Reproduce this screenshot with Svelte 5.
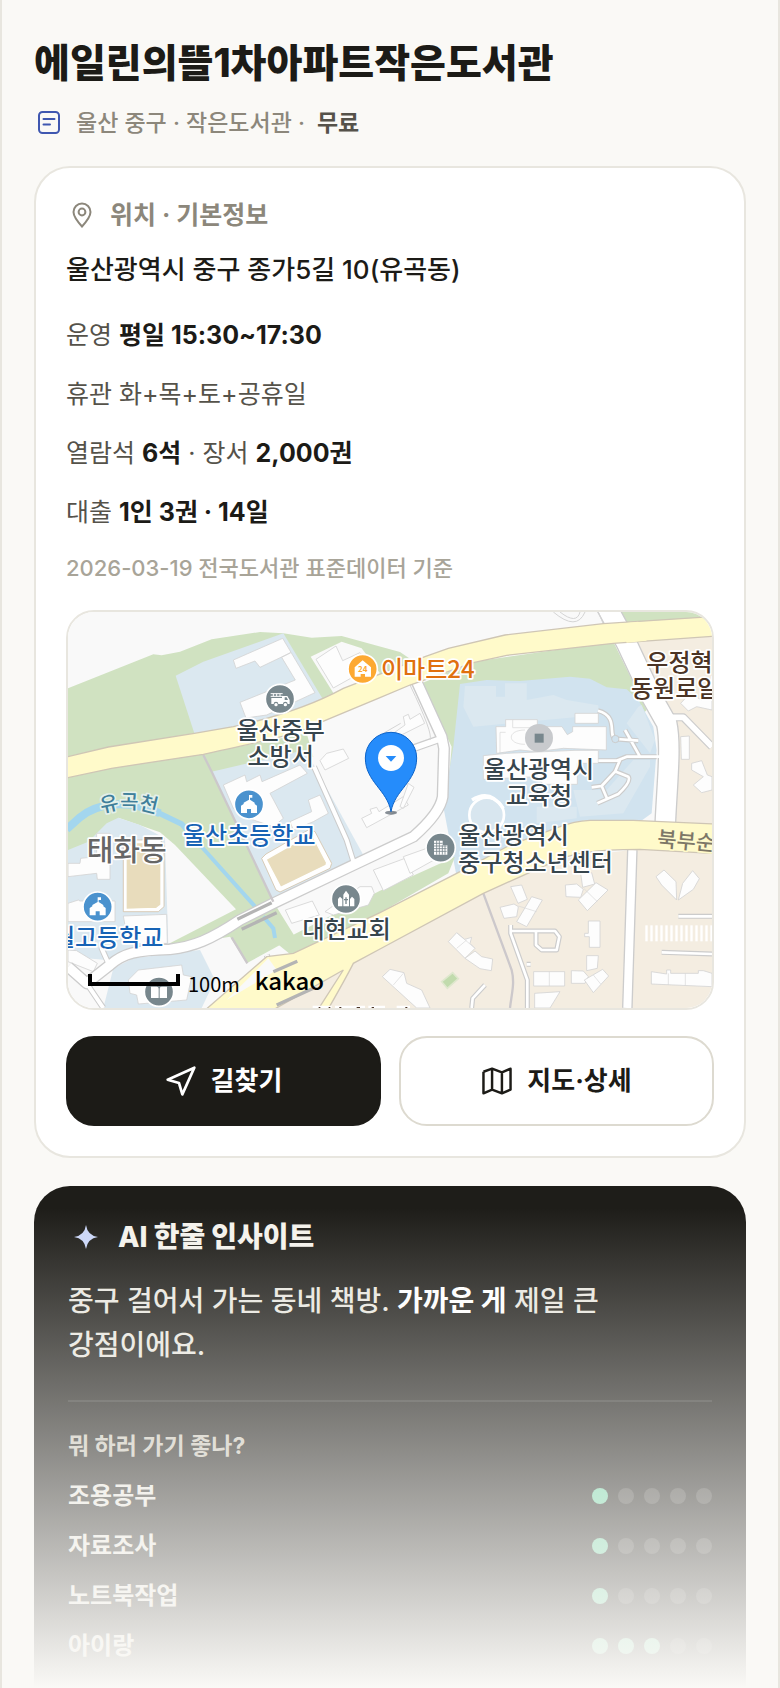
<script lang="ts">
    const library = {
        name: "에일린의뜰1차아파트작은도서관",
        region: "울산 중구 · 작은도서관 ·",
        fee: "무료",
        address: "울산광역시 중구 종가5길 10(유곡동)",
        source: "2026-03-19 전국도서관 표준데이터 기준",
    };

    const purposes = [
        { label: "조용공부", score: 1 },
        { label: "자료조사", score: 1 },
        { label: "노트북작업", score: 1 },
        { label: "아이랑", score: 3 },
    ];

    const steps = [1, 2, 3, 4, 5];

    // apartment blocks and other outlined footprints on the map
    const buildings = [
        "520,180 668,115 765,278 620,345 558,354 540,307 706,240 665,172 692,158 600,202 585,183 528,205",
        "768,178 828,138 848,182 900,158 935,200 820,264",
        "780,482 800,460 850,447 866,475 795,510",
        "490,555 555,525 560,545 600,525 606,545 720,495 742,520 630,580 670,655 640,680 550,650 520,625",
        "745,600 780,585 805,640 760,665 700,690 690,665 755,635",
        "905,655 935,640 930,628 950,622 957,635 1030,590 1045,615 920,683",
        "1000,400 1035,375 1030,350 1045,343 1050,358 1080,340 1094,370 1010,412",
        "1020,620 1045,550 1062,562 1030,625",
        "676,930 757,903 778,945 695,970",
        "940,810 1035,775 1060,825 970,872",
        "1030,770 1100,745 1122,780 1050,820",
        "795,935 900,860 935,860 943,880 925,915 820,945",
        "24,790 60,790 62,775 110,770 110,700 150,700 150,838 112,838 110,820 24,830",
        "190,948 320,943 322,1030 205,1032",
        "24,910 55,900 60,903 165,903 165,965 24,965",
        "24,1050 50,1052 112,1090 100,1115 24,1085",
        "205,1140 235,1110 365,1095 370,1125 395,1130 380,1200 235,1212 230,1185 210,1180",
        "1352,860 1385,855 1402,898 1374,910",
        "1320,922 1362,912 1375,920 1370,950 1332,955",
        "1415,890 1447,900 1400,980 1370,965",
        "1516,855 1550,852 1570,868 1562,892 1518,890",
        "1562,820 1595,818 1604,852 1568,862",
        "1555,900 1608,848 1644,870 1582,932",
        "1585,963 1620,963 1620,1042 1588,1042 1588,1010 1574,1010 1574,1000 1585,1000",
        "1580,1067 1615,1067 1612,1105 1580,1112",
        "1534,1112 1570,1113 1585,1130 1575,1150 1534,1150",
        "1573,1140 1628,1108 1646,1128 1600,1178",
        "1421,1115 1514,1115 1514,1158 1421,1158",
        "1424,1180 1500,1175 1470,1224 1424,1224",
        "1165,1025 1190,998 1214,1018 1235,1012 1230,1030 1245,1045 1215,1075",
        "1215,1075 1245,1053 1265,1070 1298,1077 1294,1112 1260,1106",
        "967,1130 990,1108 1032,1118 1040,1150 1085,1170 1110,1224 1070,1224",
        "1788,830 1812,810 1848,845 1850,900 1805,855",
        "1918,836 1898,812 1868,850 1855,900 1900,868",
        "1774,1115 1820,1122 1820,1110 1832,1110 1832,1120 1915,1120 1915,1112 1930,1112 1956,1120 1956,1160 1774,1152",
        "1862,410 1888,408 1888,478 1864,478",
        "1862,310 1890,280 1925,300 1956,280 1956,330 1910,320 1885,333",
        "1895,490 1925,482 1942,525 1956,530 1956,570 1925,578 1900,555 1930,530 1895,510",
        "1308,380 1337,380 1337,359 1432,359 1432,380 1506,380 1522,404 1538,395 1538,380 1639,380 1639,450 1510,445 1430,455 1380,450 1310,460",
        "1545,340 1615,340 1615,370 1545,370",
        "1270,467 1340,460 1545,451 1615,451 1615,490 1552,490 1552,553 1450,553 1430,530 1270,538",
    ];

    // [text, x, baseline, anchor, class]
    const labels: [string, number, number, string, string][] = [
        ["울산중부", 662, 416, "middle", "place"],
        ["소방서", 662, 496, "middle", "place"],
        ["이마트24", 963, 234, "start", "store"],
        ["울산광역시", 1437, 534, "middle", "place"],
        ["교육청", 1437, 612, "middle", "place"],
        ["우정혁신", 1759, 212, "start", "estate"],
        ["동원로얄", 1713, 291, "start", "estate"],
        ["울산초등학교", 369, 732, "start", "school"],
        ["월고등학교", 310, 1038, "end", "school"],
        ["대현교회", 860, 1014, "middle", "place"],
        ["울산광역시", 1195, 732, "start", "place"],
        ["중구청소년센터", 1195, 812, "start", "place"],
        ["태화동", 80, 783, "start", "district"],
    ];

    const stripes = Array.from({ length: 14 }, (_, i) => 1756 + i * 15);
</script>

<main class="page">
    <header class="header">
        <h1>{library.name}</h1>
        <p class="meta">
            <svg class="meta-icon" viewBox="0 0 30 30" aria-hidden="true">
                <rect x="5" y="4" width="20" height="21" rx="3.500" />
                <path d="M9.500 11h11M9.500 16.500h6.500" />
            </svg>
            <span>{library.region}</span>
            <strong>{library.fee}</strong>
        </p>
    </header>

    <section class="card">
        <h2 class="card-title">
            <svg class="pin-icon" viewBox="0 0 32 32" aria-hidden="true">
                <path d="M16 27.500C11.500 22.500 7.500 17.500 7.500 13a8.500 8.500 0 0 1 17 0c0 4.500-4 9.500-8.500 14.500z" />
                <circle cx="16" cy="13" r="3.400" />
            </svg>
            위치 · 기본정보
        </h2>
        <p class="address">{library.address}</p>
        <div class="facts">
            <p>운영 <b>평일 15:30~17:30</b></p>
            <p>휴관 화+목+토+공휴일</p>
            <p>열람석 <b>6석</b> · 장서 <b>2,000권</b></p>
            <p>대출 <b>1인 3권 · 14일</b></p>
        </div>
        <p class="source">{library.source}</p>

        <div class="map">
            <svg viewBox="24 36 1932 1188" preserveAspectRatio="xMidYMid slice" role="img" aria-label="도서관 위치 지도">
                <rect x="24" y="36" width="1932" height="1188" fill="#f9f9f9" />

                <!-- land use -->
                <path fill="#d0e2c1" d="M24 265L280 163L305 166L360 155L455 118L600 96L670 100L755 113L845 108L1020 156L1070 190L800 330L400 430L24 500z" />
                <path fill="#f9f9f9" d="M752 170L845 125L905 145L960 220L822 282z" />
                <path fill="#d0e2c1" d="M24 520L430 460L740 400L760 470L460 520L640 905L705 1010L560 1090L510 1010L325 1040L24 1000z" />
                <path fill="#f9f9f9" d="M175 653L300 697L345 735L528 928L325 1032z" />
                <path fill="#dbe8f0" d="M347 227L430 185L670 100L790 300L740 320L520 385L403 400z" />
                <path fill="#dbe8f0" d="M455 515L735 450L770 510L910 765L640 905z" />
                <path fill="#dbe8f0" d="M24 750L85 725L140 670L175 653L240 675L315 715L325 1040L140 1080L24 1070z" />
                <path fill="#dbe8f0" d="M160 1105L220 1075L420 1050L465 1140L425 1224H130z" />
                <path fill="#d0e2c1" d="M1085 250L1240 185L1660 125L1760 330L1500 600L1165 560L1175 440z" />
                <path fill="#d0e2c1" d="M1680 36H1956V60L1690 80z" />
                <path fill="#d1e3ef" d="M1200 252L1280 240L1380 243L1530 230L1590 236L1640 262L1700 268L1735 300L1780 380L1790 450L1775 640L1740 665L1500 685L1190 830L1150 620L1180 440z" />
                <path fill="#dbe8f0" d="M1215 258H1308V290H1335V250H1400V300L1480 285L1520 300L1615 316V345L1240 380L1210 320zM1735 320L1745 315L1785 420L1770 460L1700 370zM1430 620H1550V655L1430 670zM1540 570H1640L1720 480H1770V500L1690 640L1560 650z" />
                <path fill="#d0e2c1" d="M700 1070L960 938L1165 820L1185 770L960 872L650 1030z" />
                <path fill="#f4ede1" d="M640 1224L880 1090L1270 880L1480 780L1710 750L1956 750V1224z" />
                <path fill="#f4ede1" d="M1710 125L1956 105V675H1835L1845 400z" />

                <!-- buildings -->
                <g fill="#fdfdfd" stroke="#d4d4d4" stroke-width="2.500">
                    {#each buildings as points}
                        <polygon {points} />
                    {/each}
                </g>
                <g fill="none" stroke="#d8d8d8" stroke-width="2">
                    <path d="M1192 1000L1245 1045M1190 1045L1220 1020M1375 918L1430 935M1572 866L1612 905M1468 1115V1158M1600 1125L1622 1152M1825 1120V1155M1876 1120V1156M1000 1155L1030 1120M1320 460V397H1337M1358 359V383H1432M1395 390C1340 390 1340 433 1395 433" />
                </g>

                <!-- sports fields -->
                <g stroke="#cdb898" stroke-width="2">
                    <path fill="#fff" d="M605 775L618 762L745 690L765 695L815 790L810 805L660 876L648 870z" />
                    <path fill="#e8dcbc" stroke="#fff" stroke-width="4" d="M618 778L745 706L758 708L800 788L798 796L662 862z" />
                    <path fill="#fff" d="M190 720H300L312 735V920L295 935H190z" />
                    <path fill="#e8dcbc" stroke="#fff" stroke-width="4" d="M198 728H296L303 738V915L290 925L198 928z" />
                </g>

                <!-- stream -->
                <path fill="none" stroke="#a3d6ee" stroke-width="24" d="M20 688L60 652C110 610 200 595 300 640" />
                <path fill="none" stroke="#a3d6ee" stroke-width="16" d="M290 636L365 672L425 740" />
                <path fill="none" stroke="#a3d6ee" stroke-width="12" d="M420 735L590 925M610 950L640 985L645 1014" />

                <!-- minor roads: casing, then surface -->
                <g fill="none" stroke="#ccc" stroke-linejoin="round">
                    <path stroke-width="66" d="M1640 20L1700 130L1775 290L1820 370C1835 440 1820 560 1815 690" />
                    <path stroke-width="36" d="M1070 245L1145 410L1152 445L1148 590Q1140 640 1060 710L870 800L640 910L540 960C450 1020 400 1040 330 1048C230 1050 190 1060 150 1095L80 1150L24 1100" />
                    <path stroke-width="32" d="M1717 750L1702 1224" />
                    <path stroke-width="18" d="M762 500L860 720L882 790M130 1020L125 1045L145 1090M80 1150L130 1224M620 1065L640 1110" />
                    <path stroke-width="24" d="M1060 445L1145 415M1835 352H1870L1956 440" />
                    <path stroke-width="15" d="M1790 470H1700L1670 482H1615M1740 470L1695 390M1735 422L1670 417M1614 332C1680 350 1640 410 1668 417M1680 480L1665 515L1625 558L1595 562M1668 515L1705 530Q1715 545 1675 582L1612 610M1625 558L1642 598M1352 975V1000L1402 1140V1224M1355 993H1485L1498 1010L1490 1050H1445L1428 1035V995M1400 1093H1412M1235 1224L1238 1195L1275 1155M1855 949H1956M1805 1057L1956 1062" />
                </g>
                <g fill="none" stroke="#fff" stroke-linejoin="round">
                    <path stroke-width="58" d="M1640 20L1700 130L1775 290L1820 370C1835 440 1820 560 1815 690" />
                    <path stroke-width="28" d="M1070 245L1145 410L1152 445L1148 590Q1140 640 1060 710L870 800L640 910L540 960C450 1020 400 1040 330 1048C230 1050 190 1060 150 1095L80 1150L24 1100" />
                    <path stroke-width="24" d="M1717 750L1702 1224" />
                    <path stroke-width="12" d="M762 500L860 720L882 790M130 1020L125 1045L145 1090M80 1150L130 1224M620 1065L640 1110" />
                    <path stroke-width="17" d="M1060 445L1145 415M1835 352H1870L1956 440" />
                    <path stroke-width="8" d="M1800 470H1700L1670 482H1615M1740 470L1695 390M1735 422L1670 417M1614 332C1680 350 1640 410 1668 417M1680 480L1665 515L1625 558L1595 562M1668 515L1705 530Q1715 545 1675 582L1612 610M1625 558L1642 598M1352 975V1000L1402 1140V1224M1355 993H1485L1498 1010L1490 1050H1445L1428 1035V995M1400 1093H1412M1235 1224L1238 1195L1275 1155M1855 949H1956M1805 1057L1956 1062" />
                    <circle cx="1280" cy="645" r="52" stroke-width="8" fill="#d8e6ef" />
                    <path stroke-width="10" d="M1236 600Q1290 565 1330 625" />
                </g>
                <circle cx="1666" cy="417" r="11" fill="#d1e3ef" stroke="#ccc" stroke-width="3" />
                <g fill="none" stroke="#ccc8cb" stroke-width="7">
                    <path d="M430 465L455 515L500 610L640 905M515 1012L562 1090M1270 880L1355 1110C1365 1150 1355 1180 1350 1224" />
                </g>
                <path fill="none" stroke="#d4d4d4" stroke-width="3" d="M1480 36Q1550 95 1575 36M1500 36Q1550 75 1560 36M1615 36L1630 72M1110 420Q1120 400 1050 255M970 400L1022 370" />

                <!-- main roads -->
                <g fill="#fffaca" stroke="#cfc6b5" stroke-width="4">
                    <path d="M15 472L145 441L403 400L520 380C620 358 740 325 850 265L1095 170L1165 145L1335 105L1630 71L1970 49V108L1660 130L1340 166L1240 188L1050 255L960 293L780 368C730 400 600 425 430 463L155 505L15 535z" />
                    <path d="M430 1235L620 1070L700 1060L960 938L1190 820L1350 735L1500 680Q1540 664 1590 661L1720 661L1970 672V761L1740 748C1600 748 1530 760 1470 790L1270 880L960 1047L880 1090Q860 1130 800 1235H770L850 1110L630 1235z" />
                </g>
                <path fill="#f9f9f9" d="M500 1200L625 1075L650 1110z" />
                <path fill="#fffaca" d="M1675 71L1735 65L1760 122L1700 128z" />
                <g fill="none" stroke="#b4b4b4" stroke-width="10">
                    <path d="M532 958L635 908M545 988L650 938M640 1115L712 1084M650 1215L760 1165" />
                </g>
                <g fill="#fff">
                    {#each stripes as x}
                        <rect {x} y="976" width="7" height="48" />
                    {/each}
                </g>
                <path fill="#c1dbad" stroke="#dfe7ce" stroke-width="5" d="M1145 1145L1178 1118L1195 1136L1162 1165z" />

                <!-- place markers -->
                <g stroke="#fff" stroke-width="5">
                    <circle cx="660" cy="297" r="44" fill="#78878d" />
                    <circle cx="908" cy="207" r="44" fill="#fda932" />
                    <circle cx="567" cy="613" r="44" fill="#4a92ce" />
                    <circle cx="113" cy="920" r="44" fill="#4a92ce" />
                    <circle cx="858" cy="897" r="44" fill="#78878d" />
                    <circle cx="297" cy="1175" r="44" fill="#78878d" />
                    <circle cx="1142" cy="743" r="44" fill="#78878d" />
                </g>
                <circle cx="1437" cy="414" r="42" fill="#c8cacd" />
                <rect x="1424" y="401" width="27" height="27" fill="#78878d" />
                <path fill="#fff" d="M634 294H666V288H682L689 300V312H683A7 7 0 0 0 669 312H655A7 7 0 0 0 641 312H634z" />
                <path fill="none" stroke="#fff" stroke-width="3" d="M632 281H668M632 289H668M640 281V289M650 281V289M660 281V289" />
                <path fill="#78878d" d="M674 292H680L684 300H674z" />
                <circle cx="648" cy="314" r="5" fill="#fff" />
                <circle cx="676" cy="314" r="5" fill="#fff" />
                <path fill="#fff" d="M884 202L908 181L933 202V230H915V222H902V230H884z" />
                <text x="908" y="217" class="shop-number">24</text>
                {#each [[567, 613], [113, 920]] as [x, y]}
                    <path transform="translate({x} {y})" fill="#fff" d="M-24 26V4L-16 -1V-5L0 -14V-28H10V-20H3V-14L17 -5V-1L24 4V26H6V14H-6V26z" />
                {/each}
                <path fill="#fff" d="M834 919V897L840 890L847 897V919zM850 919V884L858 872L867 884V919zM870 919V897L876 890L883 897V919z" />
                <path stroke="#78878d" stroke-width="4" d="M858 892V912M852 899H864" />
                <path fill="#fff" d="M273 1160H290Q296 1160 296 1166V1194H273zM299 1166Q299 1160 305 1160H321V1194H299z" />
                <path fill="#fff" d="M1122 722H1148V736H1162V764H1122z" />
                <path fill="none" stroke="#78878d" stroke-width="2.500" d="M1122 730H1148M1122 738H1160M1122 746H1160M1122 754H1160M1130 722V764M1138 722V764M1147 736V764M1155 736V764" />

                <!-- labels -->
                {#each labels as [text, x, y, anchor, kind]}
                    <text {x} {y} text-anchor={anchor} class="label {kind}">{text}</text>
                {/each}
                <path id="stream-name" d="M126 640Q225 605 330 660" fill="none" />
                <text class="label stream"><textPath href="#stream-name">유곡천</textPath></text>
                <text class="label road" transform="translate(1790 738) rotate(5)">북부순환</text>
                <path stroke="#fff" stroke-width="9" d="M758 1222H815M825 1222H915M925 1222H975M1010 1222H1050" />
                <path stroke="#4b3425" stroke-width="4" d="M776 1223H781M806 1223H811M838 1223H844M890 1223H900M935 1223H942M1036 1223H1042" />

                <!-- library marker -->
                <ellipse cx="993" cy="638" rx="18" ry="6" fill="#55606a" opacity=".7" />
                <path fill="#258cfb" stroke="#0d63c8" stroke-width="3" d="M993 635C982 570 916 545 916 474A77 77 0 0 1 1070 474C1070 545 1004 570 993 635z" />
                <circle cx="993" cy="474" r="39" fill="#fff" />
                <path fill="#258cfb" d="M977 468H1009L993 485z" />

                <path fill="none" stroke="#000" stroke-width="12" d="M90 1122V1152H354V1122" />
                <text x="384" y="1175" class="scale">100m</text>
                <text x="584" y="1170" class="brand">kakao</text>
            </svg>
        </div>

        <div class="actions">
            <button type="button" class="primary">
                <svg viewBox="0 0 24 24" aria-hidden="true">
                    <path d="M2 11L22 2L13 22L10.500 13.500z" />
                </svg>
                길찾기
            </button>
            <button type="button">
                <svg viewBox="-1 -1 26 26" aria-hidden="true">
                    <path d="M1 4.500V22L8 19L16 22L23 19V2L16 5L8 2L1 4.500M8 2V19M16 5V22" />
                </svg>
                지도·상세
            </button>
        </div>
    </section>

    <section class="insight">
        <h2>
            <svg viewBox="0 0 36 36" aria-hidden="true">
                <path d="M18 6Q19.500 16.500 30 18Q19.500 19.500 18 30Q16.500 19.500 6 18Q16.500 16.500 18 6z" />
            </svg>
            AI 한줄 인사이트
        </h2>
        <p class="summary">중구 걸어서 가는 동네 책방. <b>가까운 게</b> 제일 큰 강점이에요.</p>
        <h3>뭐 하러 가기 좋나?</h3>
        <ul>
            {#each purposes as { label, score }}
                <li>
                    <span>{label}</span>
                    <span class="dots" role="img" aria-label="5점 중 {score}점">
                        {#each steps as step}
                            <i class:on={step <= score}></i>
                        {/each}
                    </span>
                </li>
            {/each}
        </ul>
    </section>
    <div class="fade"></div>
</main>

<style>
    :global(body) {
        margin: 0;
        background: #faf9f6;
    }

    .page {
        position: relative;
        box-sizing: border-box;
        min-height: 100vh;
        padding: 36px 32px 0;
        border: solid #e8e6df;
        border-width: 0 2px;
        color: #1c1b17;
        font-family: Inter, "Noto Sans CJK KR", sans-serif;
        word-break: keep-all;
    }

    h1,
    h2,
    h3,
    p,
    ul {
        margin: 0;
        padding: 0;
    }

    svg {
        flex: none;
    }

    h1 {
        font-size: 39px;
        font-weight: 800;
        line-height: 54px;
    }

    .meta {
        display: flex;
        align-items: center;
        gap: 12px;
        margin: 16px 0 26px;
        color: #8c877b;
        font-size: 23px;
        font-weight: 500;
        line-height: 34px;
    }

    .meta strong {
        color: #55524a;
        font-weight: 700;
    }

    .meta-icon {
        width: 30px;
        height: 30px;
        fill: none;
        stroke: #3f57b0;
        stroke-width: 2;
        stroke-linecap: round;
    }

    .card {
        padding: 30px;
        border: 2px solid #e8e6df;
        border-radius: 36px;
        background: #fff;
    }

    .card-title {
        display: flex;
        align-items: center;
        gap: 12px;
        color: #8c877b;
        font-size: 25px;
        font-weight: 700;
        line-height: 34px;
    }

    .pin-icon {
        width: 32px;
        height: 32px;
        fill: none;
        stroke: currentColor;
        stroke-width: 2;
    }

    .address {
        margin-top: 18px;
        font-size: 26px;
        font-weight: 500;
        line-height: 40px;
    }

    .facts {
        display: grid;
        gap: 19px;
        margin-top: 25px;
        color: #55524a;
        font-size: 25px;
        line-height: 40px;
    }

    .facts b {
        color: #1c1b17;
        font-weight: 700;
    }

    .source {
        margin-top: 21px;
        color: #a8a498;
        font-size: 22px;
        font-weight: 500;
        line-height: 30px;
    }

    .map {
        margin-top: 27px;
        overflow: hidden;
        border: 2px solid #e8e6df;
        border-radius: 28px;
    }

    .map svg {
        display: block;
        width: 100%;
        aspect-ratio: 644 / 396;
    }

    .map text {
        font-family: "Noto Sans CJK KR", sans-serif;
    }

    .label {
        fill: #37454d;
        stroke: #fff;
        stroke-width: 10px;
        stroke-linejoin: round;
        paint-order: stroke;
        font-size: 72px;
        font-weight: 500;
    }

    .store {
        fill: #e0700f;
    }

    .school {
        fill: #1763b5;
    }

    .estate {
        fill: #4b3425;
    }

    .district {
        fill: #666;
        font-size: 87px;
    }

    .stream {
        fill: #3f7f9b;
        stroke: #e3f0ea;
        font-size: 60px;
    }

    .road {
        fill: #7d7767;
        stroke: #fffaca;
        font-size: 63px;
    }

    .shop-number {
        fill: #fda932;
        font-size: 24px;
        font-weight: 700;
        text-anchor: middle;
    }

    .scale {
        font-size: 60px;
    }

    .brand {
        font-size: 72px;
        font-weight: 500;
    }

    .actions {
        display: grid;
        grid-template-columns: 1fr 1fr;
        gap: 18px;
        margin-top: 26px;
    }

    button {
        display: flex;
        align-items: center;
        justify-content: center;
        gap: 14px;
        height: 90px;
        padding: 0;
        border: 2px solid #dddad0;
        border-radius: 28px;
        background: #fff;
        color: #1c1b17;
        font: inherit;
        font-size: 26px;
        font-weight: 700;
        line-height: 34px;
        cursor: pointer;
    }

    button.primary {
        border-color: #1c1b17;
        background: #1c1b17;
        color: #fff;
    }

    button svg {
        width: 32px;
        height: 32px;
        fill: none;
        stroke: currentColor;
        stroke-width: 2;
        stroke-linejoin: round;
    }

    .insight {
        margin-top: 28px;
        padding: 32px 34px 17px;
        border-radius: 36px 36px 0 0;
        background: #1e1d19;
        color: #f4f2ec;
    }

    .insight h2 {
        display: flex;
        align-items: center;
        gap: 14px;
        font-size: 28px;
        font-weight: 800;
        line-height: 38px;
    }

    .insight h2 svg {
        width: 36px;
        height: 36px;
        fill: #cad6f8;
    }

    .summary {
        margin-top: 23px;
        padding-bottom: 33px;
        border-bottom: 2px solid rgba(255, 255, 255, 0.1);
        color: #e8e6df;
        font-size: 28px;
        font-weight: 500;
        line-height: 44px;
    }

    .summary b {
        color: #fff;
        font-weight: 700;
    }

    h3 {
        margin: 29px 0 10px;
        color: #c9c5b9;
        font-size: 23px;
        font-weight: 700;
        line-height: 30px;
    }

    li {
        display: flex;
        align-items: center;
        justify-content: space-between;
        color: #e8e6df;
        font-size: 24px;
        font-weight: 600;
        line-height: 50px;
    }

    .dots {
        display: flex;
        gap: 10px;
    }

    .dots i {
        width: 16px;
        height: 16px;
        border-radius: 50%;
        background: rgba(255, 255, 255, 0.16);
    }

    .dots i.on {
        background: #6fd3a5;
    }

    .fade {
        position: absolute;
        right: 0;
        bottom: 0;
        left: 0;
        height: 480px;
        background: linear-gradient(rgba(250, 249, 246, 0), #faf9f6);
        pointer-events: none;
    }
</style>
